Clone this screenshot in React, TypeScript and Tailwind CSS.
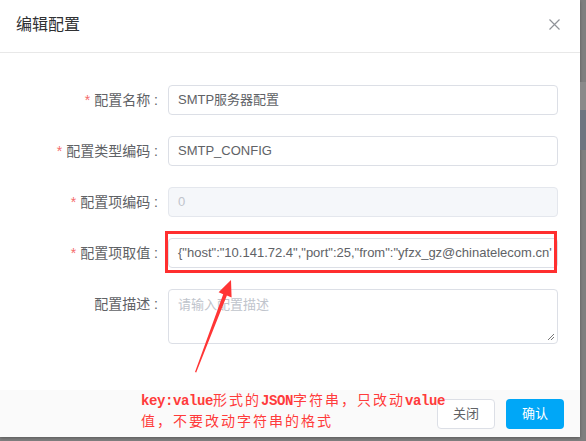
import React from "react";

const font = { fontFamily: '"Liberation Sans", "Noto Sans CJK SC", sans-serif' };

function Label({ text, required }: { text: string; required?: boolean }) {
  return (
    <div className="w-[158px] shrink-0 text-right text-[14px] leading-[30px] text-[#606266]">
      {required && <span className="text-[#f56c6c] mr-[4px]">*</span>}
      {text} :
    </div>
  );
}

const mono = { fontFamily: '"Liberation Mono", monospace' };

export default function App() {
  return (
    <div className="relative w-[586px] h-[441px] bg-[#7f7f7f] overflow-hidden" style={font}>
      <div className="absolute right-0 top-[82px] w-[6px] h-[30px] bg-[#8a8a8a]" />
      <div className="absolute right-0 top-[110px] w-[6px] h-[40px] bg-[#6f7480]" />
      <div className="w-[580px] h-[437px] bg-white flex flex-col shadow-[0_1px_3px_rgba(0,0,0,0.3)]">
        <div className="h-[53px] shrink-0 flex items-center justify-between pl-[16px] pr-[20px] border-b border-[#e8e8e8]">
          <div className="text-[16px] text-[#303133] pb-[2px]">编辑配置</div>
          <svg width="11" height="11" viewBox="0 0 11 11" className="mb-[4px]">
            <path d="M0.5 0.5 L10.5 10.5 M10.5 0.5 L0.5 10.5" stroke="#909399" strokeWidth="1.2" />
          </svg>
        </div>
        <div className="flex-1 pt-[32px] flex flex-col gap-[21px]">
          <div className="flex items-center gap-[10px]">
            <Label text="配置名称" required />
            <div className="w-[390px] h-[30px] border border-[#dcdfe6] rounded-[4px] px-[9px] flex items-center text-[13px] text-[#606266]">
              SMTP服务器配置
            </div>
          </div>
          <div className="flex items-center gap-[10px]">
            <Label text="配置类型编码" required />
            <div className="w-[390px] h-[30px] border border-[#dcdfe6] rounded-[4px] px-[9px] flex items-center text-[13px] text-[#606266]">
              SMTP_CONFIG
            </div>
          </div>
          <div className="flex items-center gap-[10px]">
            <Label text="配置项编码" required />
            <div className="w-[390px] h-[30px] border border-[#e4e7ed] bg-[#f5f7fa] rounded-[4px] px-[9px] flex items-center text-[13px] text-[#c0c4cc]">
              0
            </div>
          </div>
          <div className="flex items-center gap-[10px]">
            <Label text="配置项取值" required />
            <div className="w-[390px] h-[30px] border border-[#dcdfe6] rounded-[4px] pl-[9px] flex items-center text-[13px] text-[#606266] overflow-hidden whitespace-nowrap">
              {`{"host":"10.141.72.4","port":25,"from":"yfzx_gz@chinatelecom.cn'`}
            </div>
          </div>
          <div className="flex items-start gap-[10px]">
            <Label text="配置描述" />
            <div className="relative w-[390px] h-[55px] border border-[#dcdfe6] rounded-[4px] px-[9px] pt-[5px] text-[13px] text-[#c0c4cc]">
              请输入配置描述
              <svg width="8" height="8" viewBox="0 0 8 8" className="absolute right-[2px] bottom-[2px]">
                <path d="M7 1 L1 7 M7 4 L4 7" stroke="#777" strokeWidth="1" />
              </svg>
            </div>
          </div>
        </div>
        <div className="h-[47px] shrink-0 bg-[#fafafa] flex items-start justify-end gap-[11px] pt-[9px] pr-[16px]">
          <div className="w-[58px] h-[30px] border border-[#dcdfe6] bg-white rounded-[4px] flex items-center justify-center text-[13px] text-[#606266]">
            关闭
          </div>
          <div className="w-[58px] h-[30px] bg-[#00a7f7] rounded-[4px] flex items-center justify-center text-[13px] text-white">
            确认
          </div>
        </div>
      </div>

      {/* annotation: red box */}
      <div className="absolute left-[165px] top-[231px] w-[392px] h-[42px] border-[3px] border-[#ff2f2f]" />

      {/* annotation: arrow */}
      <svg className="absolute left-0 top-0" width="586" height="441" viewBox="0 0 586 441">
        <polygon
          points="195,372 223.2,294.2 218.6,292.3 231,280 231.6,297.5 226.9,295.6 196.2,372.4"
          fill="#ff3535"
        />
      </svg>

      {/* annotation: text */}
      <div
        className="absolute left-[141px] top-[389px] text-[14px] leading-[20.5px] tracking-[2px] text-[#ff3b3b] flex flex-col"
        style={{ fontFamily: '"Noto Sans CJK SC", sans-serif' }}
      >
        <div className="whitespace-nowrap h-[20.5px]">
          <span className="font-bold text-[14px] tracking-[-0.4px]" style={mono}>key:value</span>
          形式的
          <span className="font-bold text-[14px] tracking-[-0.4px]" style={mono}>JSON</span>
          字符串，只改动
          <span className="font-bold text-[14px] tracking-[-0.4px]" style={mono}>value</span>
        </div>
        <div className="whitespace-nowrap h-[20.5px]">值，不要改动字符串的格式</div>
      </div>
    </div>
  );
}
